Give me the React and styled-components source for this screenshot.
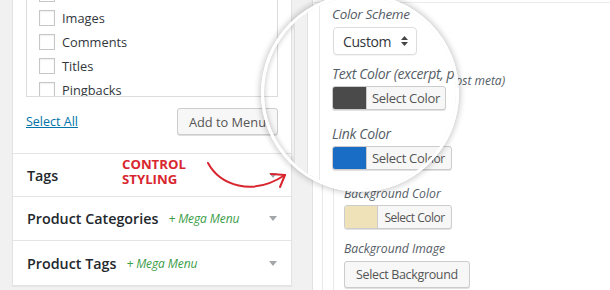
import React from 'react';
import styled, { createGlobalStyle } from 'styled-components';

const GlobalStyle = createGlobalStyle`
  html, body {
    margin: 0;
    padding: 0;
    background: #f1f1f1;
  }
  body {
    font-family: "Open Sans", "Liberation Sans", sans-serif;
    overflow: hidden;
  }
`;

const Page = styled.div`
  position: relative;
  width: 610px;
  height: 290px;
  overflow: hidden;
  background: #f1f1f1;
  display: flex;
  align-items: flex-start;
  gap: 20px;
  padding-left: 12px;
  box-sizing: border-box;
`;

// ---------- left: menu items box ----------

const MenuPanel = styled.div`
  width: 280px;
  flex: none;
  background: #fff;
  border: 1px solid #e2e2e2;
  border-top: none;
  box-shadow: 0 1px 1px rgba(0, 0, 0, 0.04);
  box-sizing: border-box;
`;

const ListSection = styled.div`
  padding: 0 13px 18px;
`;

const CheckList = styled.div`
  margin-top: -20px;
  height: 117px;
  overflow: hidden;
  border: 1px solid #dcdcdc;
  border-top: none;
  padding: 2px 0 0 12px;
  box-sizing: border-box;
`;

const CheckRow = styled.label`
  display: flex;
  align-items: center;
  gap: 7px;
  height: 24px;
  font-size: 12.8px;
  color: #32373c;
`;

const Box = styled.span`
  width: 16px;
  height: 16px;
  flex: none;
  border: 1px solid #c6c6c6;
  background: #fff;
  box-shadow: inset 0 1px 2px rgba(0, 0, 0, 0.07);
  box-sizing: border-box;
`;

const Actions = styled.div`
  display: flex;
  align-items: center;
  justify-content: space-between;
  margin-top: 11px;
`;

const TextLink = styled.a`
  font-size: 12.5px;
  color: #0073aa;
  text-decoration: underline;
`;

const Button = styled.button`
  height: ${p => p.$h || 27}px;
  margin-top: ${p => p.$mt || 0}px;
  padding: 0 ${p => p.$pad || 11}px;
  border: 1px solid #cccccc;
  border-radius: 3px;
  background: #f7f7f7;
  box-shadow: 0 1px 0 #e0e0e0;
  font-family: inherit;
  font-size: ${p => p.$size || 13}px;
  letter-spacing: ${p => p.$ls || 0}px;
  color: #555;
  white-space: nowrap;
`;

const AccordionRow = styled.div`
  display: flex;
  align-items: center;
  height: ${p => p.$h}px;
  padding: 0 14px;
  border-top: 1px solid #e5e5e5;
  box-sizing: border-box;
`;

const RowTitle = styled.span`
  font-size: 14.3px;
  font-weight: 600;
  color: #23282d;
`;

const MegaTag = styled.span`
  margin-left: 10px;
  font-size: 12px;
  font-style: italic;
  letter-spacing: -0.1px;
  color: #3c9d48;
`;

const Caret = styled.span`
  margin-left: auto;
  width: 0;
  height: 0;
  border-left: 4px solid transparent;
  border-right: 4px solid transparent;
  border-top: 5px solid #a4a7aa;
`;

const Callout = styled.div`
  position: absolute;
  left: 122px;
  top: 157px;
  font-size: 13.2px;
  font-weight: 700;
  line-height: 15px;
  color: #d8262f;
`;

const ArrowSvg = styled.svg`
  position: absolute;
  left: 200px;
  top: 155px;
`;

// ---------- right: settings panel ----------

const SettingsPanel = styled.div`
  flex: 1;
  align-self: stretch;
  background: #fff;
  border-left: 1px solid #e2e2e2;
  padding-left: 9px;
`;

const Nest = styled.div`
  height: 100%;
  border-left: 1px solid #e8e8e8;
  padding-left: ${p => p.$pad}px;
  box-sizing: border-box;
`;

const TopRule = styled.div`
  height: 2px;
  border-bottom: 1px solid #ececec;
  margin-left: -30px;
`;

const FieldList = styled.div`
  display: flex;
  flex-direction: column;
  align-items: flex-start;
  padding-top: ${p => p.$top}px;
`;

const Field = styled.div`
  display: flex;
  flex-direction: column;
  align-items: flex-start;
  gap: 2px;
  margin-top: ${p => p.$mt || 0}px;
`;

const Label = styled.span`
  font-size: ${p => p.$size}px;
  line-height: ${p => p.$lh}px;
  letter-spacing: ${p => p.$ls || 0}px;
  font-style: italic;
  color: #555d66;
  white-space: nowrap;
`;

const PickerWrap = styled.div`
  display: flex;
  height: 24px;
  border: 1px solid #cccccc;
  border-radius: 3px;
  background: #f7f7f7;
  box-shadow: 0 1px 0 #e2e2e2;
  box-sizing: border-box;
  overflow: hidden;
`;

const Swatch = styled.span`
  width: ${p => p.$w}px;
  background: ${p => p.$color};
  border-right: 1px solid #cccccc;
`;

const PickerText = styled.span`
  display: flex;
  align-items: center;
  justify-content: center;
  width: ${p => p.$w}px;
  font-size: ${p => p.$size}px;
  letter-spacing: ${p => p.$ls}px;
  color: #555;
  white-space: nowrap;
`;

const ColorPicker = ({ color, size = 12, ls = -0.5, w = 32, textW = 73 }) => (
  <PickerWrap>
    <Swatch $color={color} $w={w} />
    <PickerText $size={size} $ls={ls} $w={textW}>Select Color</PickerText>
  </PickerWrap>
);

// ---------- magnifier ----------

const Lens = styled.div`
  position: absolute;
  left: 261px;
  top: -6px;
  width: 198px;
  height: 198px;
  border-radius: 50%;
  border: 3px solid #fff;
  box-sizing: border-box;
  overflow: hidden;
  display: flex;
  box-shadow: 0 0 6px 1px rgba(0, 0, 0, 0.24), inset 0 0 5px 1px rgba(0, 0, 0, 0.2);
`;

const LensClear = styled.div`
  width: 30px;
  flex: none;
  border-right: 1px solid #dedede;
`;

const LensGap = styled.div`
  width: 12px;
  flex: none;
  background: #f1f1f1;
`;

const LensPanel = styled.div`
  flex: 1;
  background: #fff;
  border-left: 1px solid #e2e2e2;
  padding-left: 11px;
`;

const Select = styled.div`
  display: flex;
  align-items: center;
  justify-content: space-between;
  width: 84px;
  height: 28px;
  margin: 1px 0 0 1px;
  padding: 0 8px 0 9px;
  border: 1px solid #dddddd;
  border-radius: 4px;
  background: #fff;
  box-shadow: 0 1px 1px rgba(0, 0, 0, 0.05);
  box-sizing: border-box;
  font-size: 14px;
  letter-spacing: -0.4px;
  color: #32373c;
`;

const Stepper = () => (
  <svg width="7" height="10" viewBox="0 0 7 10">
    <path d="M3.5 0 L7 4 L0 4 Z M3.5 10 L7 6 L0 6 Z" fill="#444" />
  </svg>
);

export default function App() {
  return (
    <>
      <GlobalStyle />
      <Page>
        <MenuPanel>
          <ListSection>
            <CheckList>
              {['Post Formats', 'Images', 'Comments', 'Titles', 'Pingbacks'].map(item => (
                <CheckRow key={item}>
                  <Box />
                  {item}
                </CheckRow>
              ))}
            </CheckList>
            <Actions>
              <TextLink>Select All</TextLink>
              <Button $pad={11} $size={12.8}>Add to Menu</Button>
            </Actions>
          </ListSection>
          <AccordionRow $h={43}>
            <RowTitle>Tags</RowTitle>
            <Caret />
          </AccordionRow>
          <AccordionRow $h={44}>
            <RowTitle>Product Categories</RowTitle>
            <MegaTag>+ Mega Menu</MegaTag>
            <Caret />
          </AccordionRow>
          <AccordionRow $h={45}>
            <RowTitle>Product Tags</RowTitle>
            <MegaTag>+ Mega Menu</MegaTag>
            <Caret />
          </AccordionRow>
        </MenuPanel>

        <SettingsPanel>
          <Nest $pad={10}>
            <Nest $pad={10}>
              <TopRule />
              <FieldList $top={69}>
                <Field>
                  <Label $size={12} $lh={18}>Text Color (excerpt, post meta)</Label>
                  <ColorPicker color="#4a4a4a" />
                </Field>
                <Field $mt={10}>
                  <Label $size={12} $lh={18}>Link Color</Label>
                  <ColorPicker color="#1a6dc4" />
                </Field>
                <Field $mt={15}>
                  <Label $size={12.2} $lh={18}>Background Color</Label>
                  <ColorPicker color="#efe2b8" />
                </Field>
                <Field $mt={11}>
                  <Label $size={12.2} $lh={18}>Background Image</Label>
                  <Button $h={27} $mt={1} $pad={11} $size={12.5} $ls={-0.35}>Select Background</Button>
                </Field>
              </FieldList>
            </Nest>
          </Nest>
        </SettingsPanel>

        <Callout>
          CONTROL
          <br />
          STYLING
        </Callout>
        <ArrowSvg width="95" height="42" viewBox="0 0 95 42">
          <path d="M8 8 C20 30 52 42 85 20" fill="none" stroke="#d8262f" strokeWidth="2" strokeLinecap="round" />
          <path d="M71 19 L85 20 L80 32" fill="none" stroke="#d8262f" strokeWidth="2" strokeLinecap="round" strokeLinejoin="round" />
        </ArrowSvg>

        <Lens>
          <LensClear />
          <LensGap />
          <LensPanel>
            <Nest $pad={12}>
              <FieldList $top={7}>
                <Field>
                  <Label $size={13.5} $lh={20} $ls={-0.3}>Color Scheme</Label>
                  <Select>
                    Custom
                    <Stepper />
                  </Select>
                </Field>
                <Field $mt={9}>
                  <Label $size={14} $lh={20} $ls={-0.35}>Text Color (excerpt, post meta)</Label>
                  <ColorPicker color="#4a4a4a" size={13} ls={-0.3} w={33} textW={78} />
                </Field>
                <Field $mt={14}>
                  <Label $size={14} $lh={20} $ls={-0.3}>Link Color</Label>
                  <ColorPicker color="#1a6dc4" size={13} ls={-0.3} w={33} textW={78} />
                </Field>
              </FieldList>
            </Nest>
          </LensPanel>
        </Lens>
      </Page>
    </>
  );
}
